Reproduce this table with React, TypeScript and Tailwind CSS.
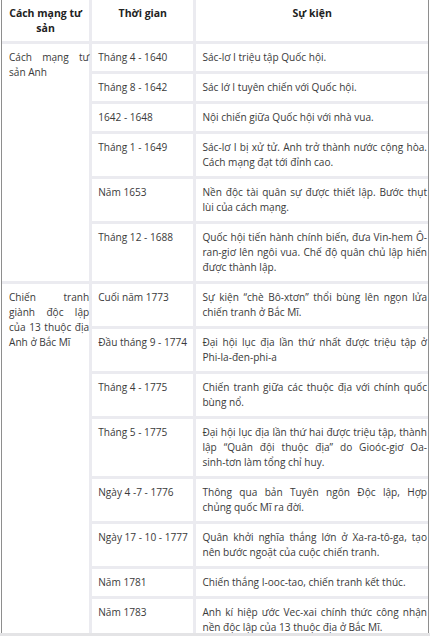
import { FC } from "react";

type Row = { time: string; event: string[] };
type Group = { name: string[]; rows: Row[] };

const groups: Group[] = [
  {
    name: ["Cách mạng tư", "sản Anh"],
    rows: [
      { time: "Tháng 4 - 1640", event: ["Sác-lơ I triệu tập Quốc hội."] },
      { time: "Tháng 8 - 1642", event: ["Sác lớ I tuyên chiến với Quốc hội."] },
      { time: "1642 - 1648", event: ["Nội chiến giữa Quốc hội với nhà vua."] },
      {
        time: "Tháng 1 - 1649",
        event: ["Sác-lơ I bị xử tử. Anh trở thành nước cộng hòa.", "Cách mạng đạt tới đỉnh cao."],
      },
      {
        time: "Năm 1653",
        event: ["Nền độc tài quân sự được thiết lập. Bước thụt", "lùi của cách mạng."],
      },
      {
        time: "Tháng 12 - 1688",
        event: [
          "Quốc hội tiến hành chính biến, đưa Vin-hem Ô-",
          "ran-giơ lên ngôi vua. Chế độ quân chủ lập hiến",
          "được thành lập.",
        ],
      },
    ],
  },
  {
    name: ["Chiến tranh", "giành độc lập", "của 13 thuộc địa", "Anh ở Bắc Mĩ"],
    rows: [
      {
        time: "Cuối năm 1773",
        event: ["Sự kiện “chè Bô-xtơn” thổi bùng lên ngọn lửa", "chiến tranh ở Bắc Mĩ."],
      },
      {
        time: "Đầu tháng 9 - 1774",
        event: ["Đại hội lục địa lần thứ nhất được triệu tập ở", "Phi-la-đen-phi-a"],
      },
      {
        time: "Tháng 4 - 1775",
        event: ["Chiến tranh giữa các thuộc địa với chính quốc", "bùng nổ."],
      },
      {
        time: "Tháng 5 - 1775",
        event: [
          "Đại hội lục địa lần thứ hai được triệu tập, thành",
          "lập “Quân đội thuộc địa” do Gioóc-giơ Oa-",
          "sinh-tơn làm tổng chỉ huy.",
        ],
      },
      {
        time: "Ngày 4 -7 - 1776",
        event: ["Thông qua bản Tuyên ngôn Độc lập, Hợp", "chủng quốc Mĩ ra đời."],
      },
      {
        time: "Ngày 17 - 10 - 1777",
        event: ["Quân khởi nghĩa thắng lớn ở Xa-ra-tô-ga, tạo", "nên bước ngoặt của cuộc chiến tranh."],
      },
      { time: "Năm 1781", event: ["Chiến thắng I-ooc-tao, chiến tranh kết thúc."] },
      {
        time: "Năm 1783",
        event: ["Anh kí hiệp ước Vec-xai chính thức công nhận", "nền độc lập của 13 thuộc địa ở Bắc Mĩ."],
      },
    ],
  },
];

// each line is its own block so the breaks match; every line but the last is justified
const Lines: FC<{ lines: string[] }> = ({ lines }) => (
  <>
    {lines.map((l, i) => (
      <span
        key={i}
        className={
          i < lines.length - 1
            ? "block whitespace-nowrap text-justify [text-align-last:justify]"
            : "block whitespace-nowrap"
        }
      >
        {l}
      </span>
    ))}
  </>
);

const App: FC = () => {
  return (
    <div
      className="w-[430px] h-[636px] overflow-hidden bg-white flex flex-col text-[#3a3a3a] text-[10.1px] leading-[15px]"
      style={{ fontFamily: '"Open Sans", "Noto Sans", sans-serif' }}
    >
      <div className="h-[633px] overflow-hidden pl-[1px]">
        <div className="w-[428px] border-l border-r border-[#8e8e8e]">
          <table className="w-full table-fixed border-separate border-spacing-0">
            <thead>
              <tr>
                <th className="w-[87px] pt-[6px] pb-[5px] px-[4px] align-top text-center font-bold text-[#222] text-[10.5px]">
                  Cách mạng tư
                  <br />
                  sản
                </th>
                <th className="w-[104px] pt-[6px] pb-[5px] align-top text-center font-bold text-[#222] text-[10.5px] border-l-[3px] border-[#ebebf0]">
                  Thời gian
                </th>
                <th className="w-[234px] pt-[6px] pb-[5px] align-top text-center font-bold text-[#222] text-[10.5px] border-l-[3px] border-[#ebebf0]">
                  Sự kiện
                </th>
              </tr>
            </thead>
            <tbody>
              {groups.map((g) =>
                g.rows.map((r, i) => (
                  <tr key={g.name[0] + r.time}>
                    {i === 0 && (
                      <td
                        rowSpan={g.rows.length}
                        className="pl-[7px] pr-0 py-[6px] align-top border-t-[3px] border-[#ebebf0]"
                      >
                        <Lines lines={g.name} />
                      </td>
                    )}
                    <td className="pl-[6px] pr-0 py-[6px] align-top whitespace-nowrap border-t-[3px] border-l-[3px] border-[#ebebf0]">
                      {r.time}
                    </td>
                    <td className="pl-[6px] pr-[1px] py-[6px] align-top border-t-[3px] border-l-[3px] border-[#ebebf0]">
                      <Lines lines={r.event} />
                    </td>
                  </tr>
                ))
              )}
            </tbody>
          </table>
        </div>
      </div>
      <div className="flex-1 bg-[#e4e4e6]" />
    </div>
  );
};

export default App;
